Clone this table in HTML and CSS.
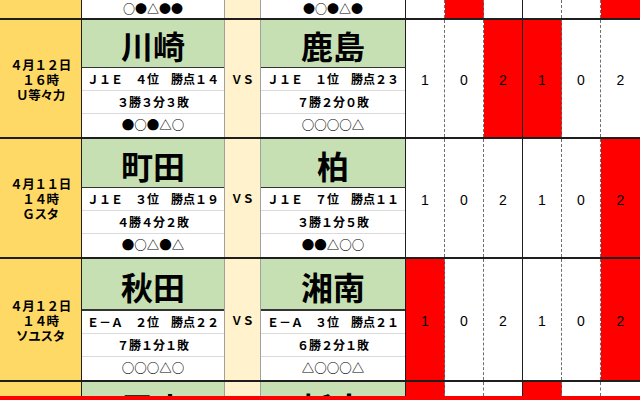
FILE: index.html
```html
<!DOCTYPE html>
<html lang="ja">
<head>
<meta charset="utf-8">
<title>対戦表</title>
<link rel="stylesheet" href="styles.css">
</head>
<body>
<div class="sheet">
  <div class="row top">
    <div class="date"></div>
    <div class="team"><div class="line marks">○●△●●</div></div>
    <div class="vs"></div>
    <div class="team team2"><div class="line marks">●○●△●</div></div>
    <div class="sc"></div>
    <div class="sc red"></div>
    <div class="sc solid"></div>
    <div class="sc"></div>
    <div class="sc"></div>
    <div class="sc last red"></div>
  </div>

  <div class="row r1">
    <div class="date"><div class="dl">４月１２日</div><div class="dl">１６時</div><div class="dl">Ｕ等々力</div></div>
    <div class="team">
      <div class="name">川崎</div>
      <div class="line">Ｊ１Ｅ　４位　勝点１４</div>
      <div class="line">３勝３分３敗</div>
      <div class="line marks">●○●△○</div>
    </div>
    <div class="vs">ＶＳ</div>
    <div class="team team2">
      <div class="name">鹿島</div>
      <div class="line">Ｊ１Ｅ　１位　勝点２３</div>
      <div class="line">７勝２分０敗</div>
      <div class="line marks">○○○○△</div>
    </div>
    <div class="sc">1</div>
    <div class="sc">0</div>
    <div class="sc solid red">2</div>
    <div class="sc red">1</div>
    <div class="sc">0</div>
    <div class="sc last">2</div>
  </div>

  <div class="row r2">
    <div class="date"><div class="dl">４月１１日</div><div class="dl">１４時</div><div class="dl">Ｇスタ</div></div>
    <div class="team">
      <div class="name">町田</div>
      <div class="line">Ｊ１Ｅ　３位　勝点１９</div>
      <div class="line">４勝４分２敗</div>
      <div class="line marks">●○△●△</div>
    </div>
    <div class="vs">ＶＳ</div>
    <div class="team team2">
      <div class="name">柏</div>
      <div class="line">Ｊ１Ｅ　７位　勝点１１</div>
      <div class="line">３勝１分５敗</div>
      <div class="line marks">●●△○○</div>
    </div>
    <div class="sc">1</div>
    <div class="sc">0</div>
    <div class="sc solid">2</div>
    <div class="sc">1</div>
    <div class="sc">0</div>
    <div class="sc last red">2</div>
  </div>

  <div class="row r3">
    <div class="date"><div class="dl">４月１２日</div><div class="dl">１４時</div><div class="dl">ソユスタ</div></div>
    <div class="team">
      <div class="name thick">秋田</div>
      <div class="line">Ｅ－Ａ　２位　勝点２２</div>
      <div class="line">７勝１分１敗</div>
      <div class="line marks">○○○△○</div>
    </div>
    <div class="vs">ＶＳ</div>
    <div class="team team2">
      <div class="name thick">湘南</div>
      <div class="line">Ｅ－Ａ　３位　勝点２１</div>
      <div class="line">６勝２分１敗</div>
      <div class="line marks">△○○○△</div>
    </div>
    <div class="sc red">1</div>
    <div class="sc">0</div>
    <div class="sc solid">2</div>
    <div class="sc">1</div>
    <div class="sc">0</div>
    <div class="sc last red">2</div>
  </div>

  <div class="row r4">
    <div class="date"></div>
    <div class="team">
      <div class="name">甲府</div>
    </div>
    <div class="vs"></div>
    <div class="team team2">
      <div class="name">栃木</div>
    </div>
    <div class="sc red"></div>
    <div class="sc"></div>
    <div class="sc solid"></div>
    <div class="sc red"></div>
    <div class="sc"></div>
    <div class="sc last"></div>
  </div>

  <div class="redbar"></div>
</div>
</body>
</html>
```

FILE: styles.css
```css
html, body {
  margin: 0;
  padding: 0;
  background: #ffffff;
}

body {
  font-family: "Noto Sans CJK JP", "Noto Sans", sans-serif;
  color: #000;
}

.sheet {
  width: 640px;
  height: 400px;
  overflow: hidden;
  display: flex;
  flex-direction: column;
}

.row {
  flex: none;
  display: grid;
  grid-template-columns: 82px 143px 36px 145px repeat(6, 39px);
  border-top: 2px solid #1e1e1e;
  box-sizing: border-box;
  overflow: hidden;
}

.row.top {
  height: 18px;
  border-top: none;
}

.row.r1 { height: 119px; }
.row.r2 { height: 120px; }
.row.r3 { height: 123px; }
.row.r4 { height: 16px; }

.redbar {
  flex: none;
  height: 4px;
  background: #ff0000;
}

.date {
  background: #ffd966;
  border-right: 1px solid #1e1e1e;
  display: flex;
  flex-direction: column;
  align-items: center;
  justify-content: center;
  text-align: center;
  font-size: 12.5px;
  font-weight: 700;
  letter-spacing: -0.3px;
  padding-top: 1px;
  gap: 2px;
}

.dl {
  line-height: 13px;
  white-space: nowrap;
}

.team {
  display: flex;
  flex-direction: column;
  border-right: 1px solid #a0a0a0;
  min-height: 0;
  overflow: hidden;
}

.team.team2 {
  border-right: 1px solid #1e1e1e;
}

.row.top .team {
  justify-content: center;
}

.name {
  flex: 1 0 auto;
  background: #c6e0b4;
  border-bottom: 1px solid #333;
  display: flex;
  align-items: center;
  justify-content: center;
  font-size: 32px;
  font-weight: 700;
  line-height: 1;
  padding-top: 3px;
  box-sizing: border-box;
}

.name.thick {
  border-bottom: 2px solid #333;
}

.row.r4 .name {
  flex: none;
  height: 48px;
  align-items: flex-start;
  padding-top: 9px;
}

.line {
  flex: none;
  height: 23px;
  border-bottom: 1px solid #dadada;
  display: flex;
  align-items: center;
  justify-content: center;
  font-size: 12px;
  font-weight: 700;
  line-height: 1;
  box-sizing: border-box;
  white-space: nowrap;
}

.line.marks {
  font-size: 12.5px;
}

.line:last-child {
  border-bottom: none;
}

.row.top .line {
  height: 18px;
  padding-bottom: 1px;
  font-size: 12px;
}

.vs {
  background: #fff2cc;
  border-right: 1px solid #a0a0a0;
  display: flex;
  align-items: center;
  justify-content: center;
  font-size: 11.5px;
  font-weight: 700;
  line-height: 1;
  padding-top: 2px;
}

.sc {
  border-right: 1px dashed #6e6e6e;
  display: flex;
  align-items: center;
  justify-content: center;
  font-family: "Liberation Sans", Arial, sans-serif;
  font-size: 14px;
  line-height: 1;
  padding-top: 3px;
}

.sc.solid {
  border-right: 1px solid #1e1e1e;
}

.sc.last {
  border-right: none;
}

.sc.red {
  background: #ff0000;
}
```
